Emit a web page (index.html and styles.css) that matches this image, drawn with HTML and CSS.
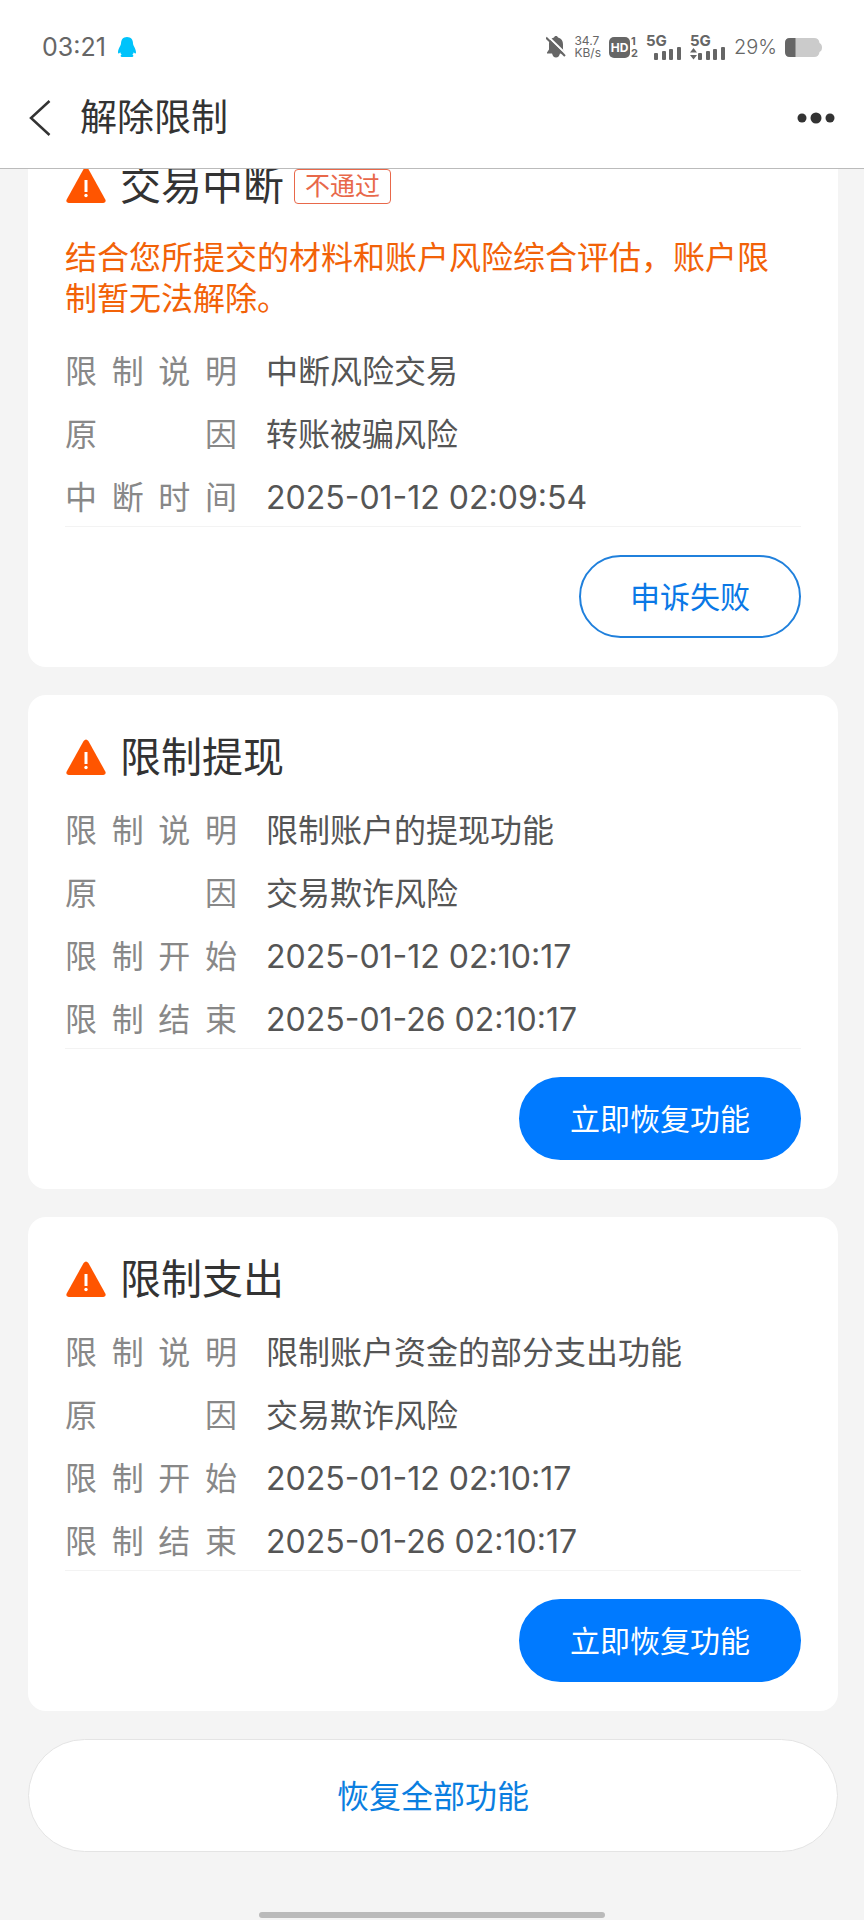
FILE: index.html
```html
<!DOCTYPE html>
<html lang="zh-CN">
<head>
    <meta charset="UTF-8" />
    <meta name="viewport" content="width=device-width, initial-scale=1.0" />
    <title>解除限制</title>
    <link rel="stylesheet" href="styles.css">
</head>
<body>
<!-- Iconos compartidos -->
<svg class="sprite" aria-hidden="true">
    <symbol id="icon-warning" viewBox="0 0 40 36">
        <path d="M17.600 2Q20-1.200 22.400 2L39.300 32.500Q40.600 35.600 37.400 36H2.600Q-.600 35.600.700 32.500Z" fill="#ff5500" />
        <path d="M20 13V25" stroke="#fff" stroke-width="3" />
        <circle cx="20" cy="28.500" r="1.700" fill="#fff" />
    </symbol>
</svg>

<header class="header">
    <div class="status-bar">
        <span class="clock">03:21</span>
        <svg class="penguin" width="18" height="20" viewBox="0 0 18 20">
            <path d="M9 0C5 0 3 2.800 3 6.500C3 8.500 0 11.500 0 15.500C0 17 1 16.800 2.300 15.300C2.500 16.500 3 17 3.600 17.600C2 18.300 2.400 20 4 20H14C15.600 20 16 18.300 14.400 17.600C15 17 15.500 16.500 15.700 15.300C17 16.800 18 17 18 15.500C18 11.500 15 8.500 15 6.500C15 2.800 13 0 9 0Z" fill="#00c3fb" />
        </svg>
        <div class="status-icons">
            <svg width="20" height="22" viewBox="0 0 20 22" fill="#666">
                <path d="M10 0C11 0 11.800.6 12 1.500C15.500 2.300 17 5 17 8.500V13.500L19 16.500V17.500H1V16.500L3 13.500V8.500C3 5 4.500 2.300 8 1.500C8.200.6 9 0 10 0Z" />
                <path d="M6 17H14C13.500 20 12 21.500 10 21.500S6.500 20 6 17Z" />
                <path d="M1.500 0L20 18" stroke="#fff" stroke-width="2" />
                <path d="M0 1.500L19 20" stroke="#666" stroke-width="2" />
            </svg>
            <span class="speed">34.7<br>KB/s</span>
            <span class="hd">
                <span class="hd-box">HD</span>
                <span class="hd-sim">1<br>2</span>
            </span>
            <span class="signal">
                <span class="net">5G</span>
                <svg width="36" height="13" viewBox="0 0 36 13" fill="#666">
                    <rect x="8" y="6" width="4" height="7" rx="1" />
                    <rect x="16" y="4" width="4" height="9" rx="1" />
                    <rect x="23" y="2" width="4" height="11" rx="1" />
                    <rect x="31" y="0" width="4" height="13" rx="1" />
                </svg>
            </span>
            <span class="signal">
                <span class="net">5G</span>
                <svg width="36" height="13" viewBox="0 0 36 13" fill="#666">
                    <path d="M0 5.500L3.500 1L7 5.500ZM0 8H7L3.500 12.500Z" />
                    <rect x="8" y="6" width="4" height="7" rx="1" />
                    <rect x="16" y="4" width="4" height="9" rx="1" />
                    <rect x="23" y="2" width="4" height="11" rx="1" />
                    <rect x="31" y="0" width="4" height="13" rx="1" />
                </svg>
            </span>
            <span class="percent">29%</span>
            <svg width="37" height="19" viewBox="0 0 37 19">
                <path d="M5 0H29Q34 0 34.500 5Q37 6 37 9.500T34.500 14Q34 19 29 19H5Q0 19 0 14V5Q0 0 5 0Z" fill="#cbcbcb" />
                <path d="M10.500 0H5Q0 0 0 5V14Q0 19 5 19H10.500Z" fill="#666" />
            </svg>
        </div>
    </div>
    <div class="nav">
        <button class="icon-button" aria-label="返回">
            <svg width="22" height="36" viewBox="0 0 22 36">
                <path d="M20.500 1L2 18L20.500 35" fill="none" stroke="#333" stroke-width="2.500" />
            </svg>
        </button>
        <h1>解除限制</h1>
        <button class="icon-button more" aria-label="更多">
            <svg width="38" height="12" viewBox="0 0 38 12" fill="#333">
                <circle cx="5" cy="6" r="4.500" />
                <circle cx="19" cy="6" r="5.500" />
                <circle cx="33" cy="6" r="4.500" />
            </svg>
        </button>
    </div>
</header>

<main class="content">
    <section class="card first">
        <div class="card-title">
            <svg class="warning"><use href="#icon-warning" /></svg>
            <h2>交易中断</h2>
            <span class="badge">不通过</span>
        </div>
        <p class="notice">结合您所提交的材料和账户风险综合评估，账户限制暂无法解除。</p>
        <dl class="info">
            <dt>限制说明</dt><dd>中断风险交易</dd>
            <dt>原因</dt><dd>转账被骗风险</dd>
            <dt>中断时间</dt><dd>2025-01-12 02:09:54</dd>
        </dl>
        <div class="actions">
            <button class="btn btn-outline">申诉失败</button>
        </div>
    </section>

    <section class="card">
        <div class="card-title">
            <svg class="warning"><use href="#icon-warning" /></svg>
            <h2>限制提现</h2>
        </div>
        <dl class="info">
            <dt>限制说明</dt><dd>限制账户的提现功能</dd>
            <dt>原因</dt><dd>交易欺诈风险</dd>
            <dt>限制开始</dt><dd>2025-01-12 02:10:17</dd>
            <dt>限制结束</dt><dd>2025-01-26 02:10:17</dd>
        </dl>
        <div class="actions">
            <button class="btn">立即恢复功能</button>
        </div>
    </section>

    <section class="card">
        <div class="card-title">
            <svg class="warning"><use href="#icon-warning" /></svg>
            <h2>限制支出</h2>
        </div>
        <dl class="info">
            <dt>限制说明</dt><dd>限制账户资金的部分支出功能</dd>
            <dt>原因</dt><dd>交易欺诈风险</dd>
            <dt>限制开始</dt><dd>2025-01-12 02:10:17</dd>
            <dt>限制结束</dt><dd>2025-01-26 02:10:17</dd>
        </dl>
        <div class="actions">
            <button class="btn">立即恢复功能</button>
        </div>
    </section>

    <button class="restore-all">恢复全部功能</button>
</main>
<div class="home-indicator"></div>
</body>
</html>
```
FILE: styles.css
```css
* {
    box-sizing: border-box;
}

body {
    margin: 0;
    background-color: #f4f4f4;
    color: #333;
    font-family: Inter, "Noto Sans CJK SC", sans-serif;
}

h1, h2, p, dl, dd {
    margin: 0;
    font-weight: 400;
}

button {
    font-family: inherit;
    cursor: pointer;
}

svg {
    display: block;
    flex-shrink: 0;
}

.sprite {
    display: none;
}

/* Cabecera */
.header {
    position: sticky;
    top: 0;
    z-index: 1;
    background-color: #fff;
    border-bottom: 1px solid #bbb;
    padding: 14px 0 12px;
}

.status-bar {
    display: flex;
    align-items: center;
    height: 66px;
    padding: 0 42px;
    color: #666;
}

.clock {
    font-size: 25px;
}

.penguin {
    margin-left: 12px;
}

.status-icons {
    display: flex;
    align-items: center;
    gap: 8px;
    margin-left: auto;
}

.speed {
    font-size: 12px;
    line-height: 12px;
}

.hd {
    display: flex;
    align-items: center;
    gap: 1px;
    font-weight: 700;
}

.hd-box {
    width: 21px;
    border-radius: 5px;
    background-color: #666;
    color: #fff;
    font-size: 12px;
    line-height: 21px;
    text-align: center;
}

.hd-sim {
    font-size: 11px;
    line-height: 12px;
}

.signal {
    display: flex;
    flex-direction: column;
}

.net {
    font-size: 15px;
    font-weight: 700;
    line-height: 12px;
}

.percent {
    font-size: 20px;
    font-weight: 300;
}

.nav {
    display: flex;
    align-items: center;
    height: 76px;
    padding: 0 29px;
}

.nav h1 {
    margin-left: 29px;
    font-size: 37px;
    line-height: 52px;
}

.icon-button {
    padding: 0;
    border: none;
    background: none;
}

.more {
    margin-left: auto;
}

/* Tarjetas */
.content {
    display: flex;
    flex-direction: column;
    gap: 28px;
    padding: 0 26px 0 28px;
}

.card {
    padding: 36px 37px 29px;
    border-radius: 18px;
    background-color: #fff;
}

/* Queda parcialmente debajo de la cabecera */
.card.first {
    margin-top: -46px;
}

.card-title {
    display: flex;
    align-items: center;
    height: 52px;
    margin-bottom: 26px;
}

.warning {
    width: 40px;
    height: 36px;
    margin: 0 14px 0 1px;
}

.card-title h2 {
    font-size: 41px;
    line-height: 52px;
}

.badge {
    margin: 3px 0 0 10px;
    padding: 0 10px;
    border: 1px solid #e8684a;
    border-radius: 4px;
    color: #e8684a;
    font-size: 25px;
    line-height: 33px;
}

.notice {
    margin-bottom: 31px;
    padding-right: 16px;
    color: #f26208;
    font-size: 32px;
    line-height: 41px;
}

.info {
    display: grid;
    grid-template-columns: 172px 1fr;
    gap: 20px 29px;
    padding-bottom: 7px;
    border-bottom: 1px solid #f3f3f3;
    font-size: 32px;
    line-height: 43px;
}

.info dt {
    color: #888;
    text-align: justify;
    text-align-last: justify;
}

.info dd {
    color: #555;
}

.actions {
    display: flex;
    justify-content: flex-end;
    margin-top: 28px;
}

.btn {
    height: 83px;
    padding: 0 49px 4px;
    border: 2px solid #007aff;
    border-radius: 42px;
    background-color: #007aff;
    color: #fff;
    font-size: 30px;
}

.btn-outline {
    border-color: #2080dc;
    background-color: #fff;
    color: #0a78e6;
}

.restore-all {
    height: 113px;
    padding-bottom: 4px;
    border: 1px solid #e4e4e4;
    border-radius: 57px;
    background-color: #fff;
    color: #0a7ee0;
    font-size: 32px;
}

.home-indicator {
    width: 40%;
    height: 6px;
    margin: 60px auto 0;
    border-radius: 3px;
    background-color: #bababa;
}
```
